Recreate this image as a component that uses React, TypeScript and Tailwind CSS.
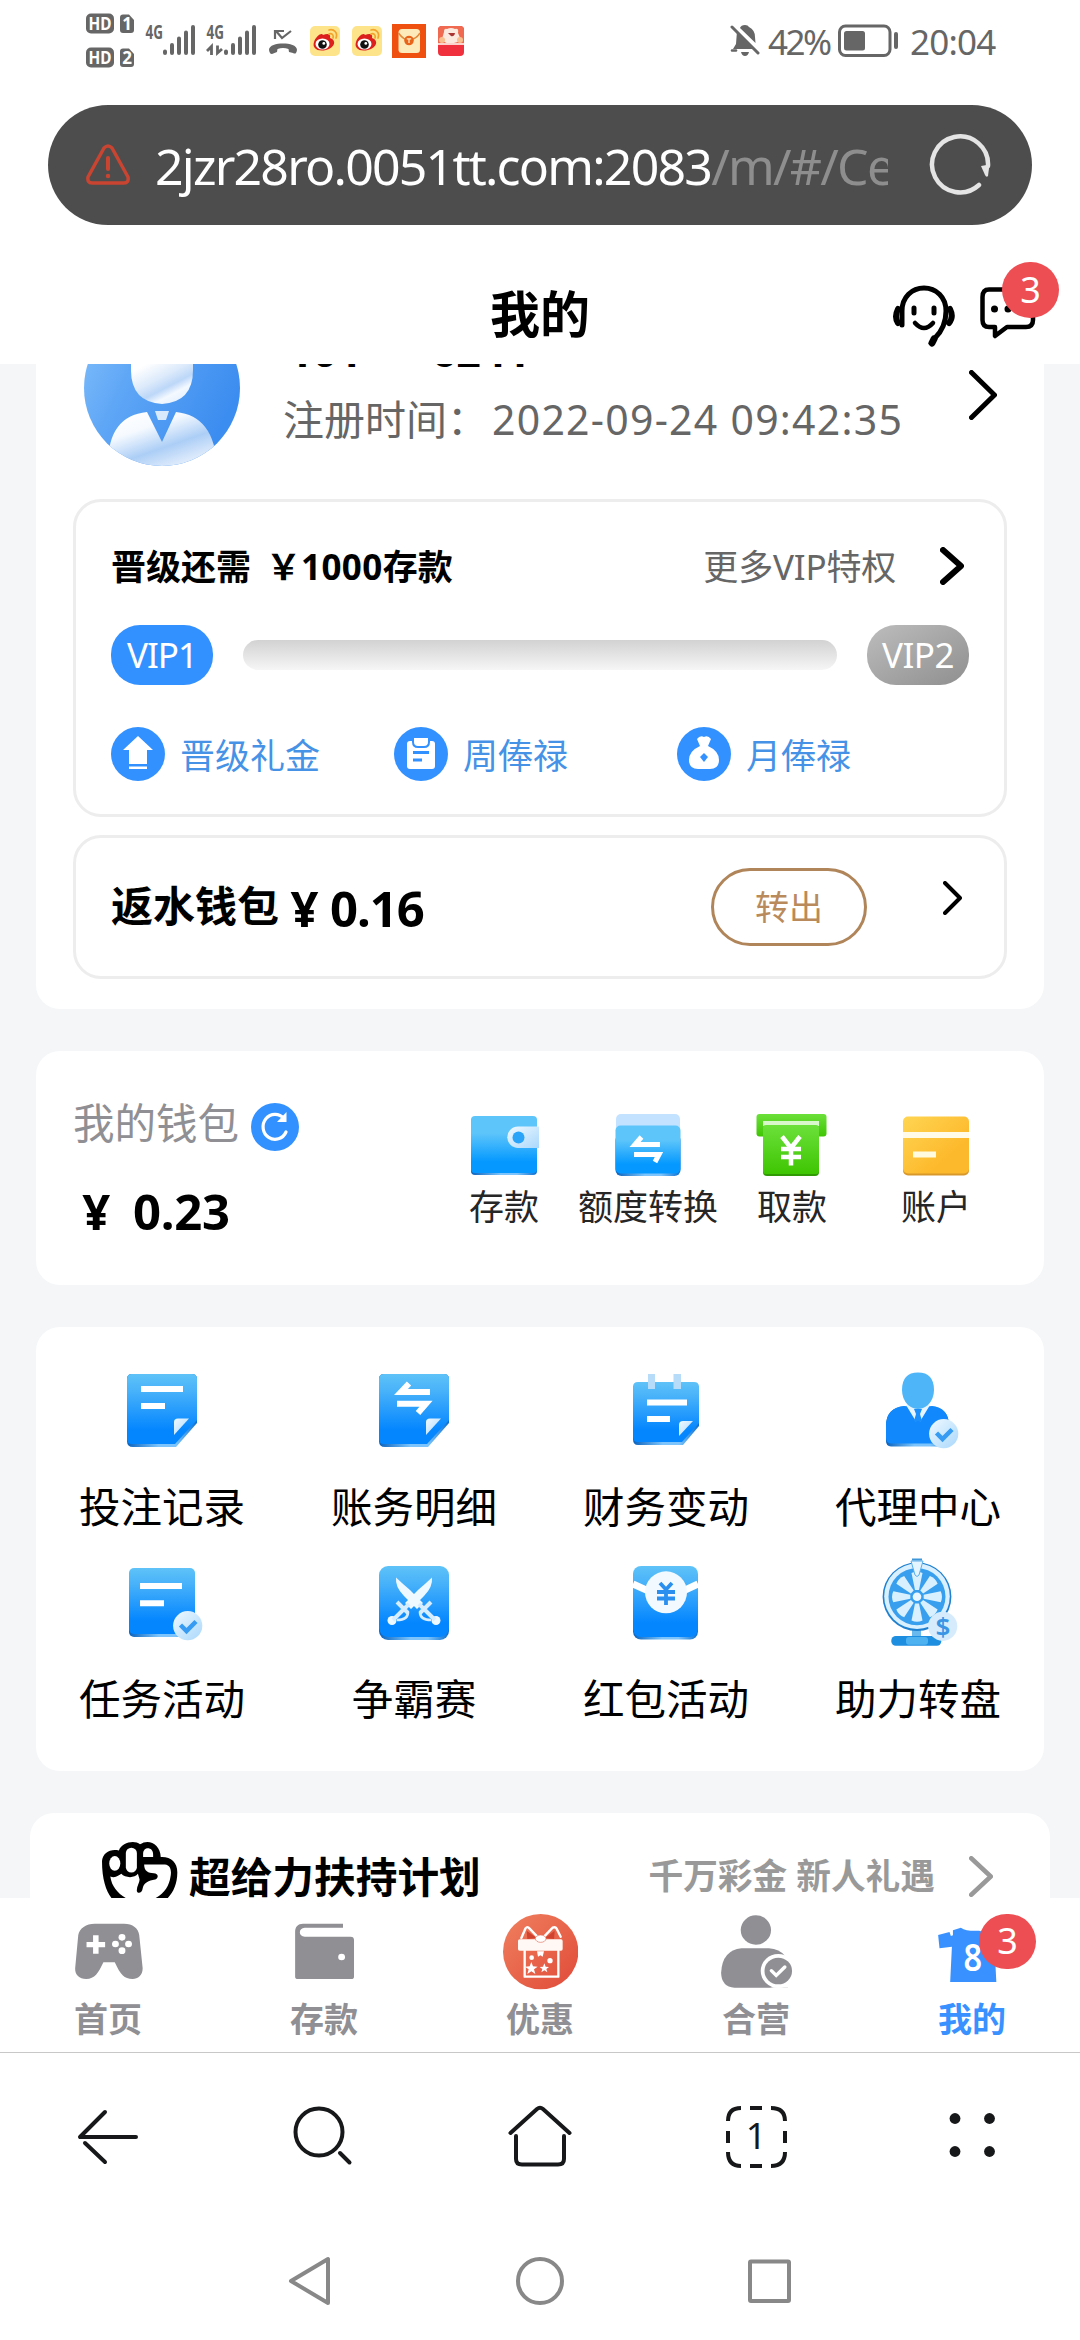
import React from "react";

const Defs = () => (
  <svg className="absolute" width="0" height="0">
    <defs>
      <linearGradient id="blue" x1="0" y1="0" x2="0" y2="1">
        <stop offset="0" stopColor="#5fc3f8" />
        <stop offset="0.25" stopColor="#47b1fa" />
        <stop offset="0.8" stopColor="#0486ff" />
        <stop offset="1" stopColor="#0486ff" />
      </linearGradient>
      <linearGradient id="wallet" x1="0" y1="0" x2="0" y2="1">
        <stop offset="0.3" stopColor="#5ec5fa" />
        <stop offset="0.8" stopColor="#0599ff" />
      </linearGradient>
      <linearGradient id="edge">
        <stop offset="0" stopColor="#0a62bd" />
        <stop offset="0.45" stopColor="#7cc4fb" />
        <stop offset="0.7" stopColor="#7cc4fb" />
        <stop offset="1" stopColor="#0a6fd0" />
      </linearGradient>
      <linearGradient id="pale" x1="0" y1="0" x2="1" y2="1">
        <stop offset="0" stopColor="#f0f9ff" />
        <stop offset="1" stopColor="#a9d8fc" />
      </linearGradient>
      <linearGradient id="green" x1="0" y1="0" x2="0" y2="1">
        <stop offset="0" stopColor="#6be03a" />
        <stop offset="1" stopColor="#3fc502" />
      </linearGradient>
      <linearGradient id="yellow" x1="0" y1="0" x2="1" y2="1">
        <stop offset="0" stopColor="#ffd552" />
        <stop offset="0.7" stopColor="#fdb92c" />
      </linearGradient>
      <linearGradient id="avatar" x1="0" y1="0" x2="1" y2="0.5">
        <stop offset="0" stopColor="#85c1fb" />
        <stop offset="0.4" stopColor="#5ea6f6" />
        <stop offset="1" stopColor="#3c8df0" />
      </linearGradient>
      <linearGradient id="head" x1="0.1" y1="0" x2="0.75" y2="1">
        <stop offset="0.2" stopColor="#ffffff" />
        <stop offset="0.5" stopColor="#dceafb" />
        <stop offset="0.68" stopColor="#bcd7f8" />
        <stop offset="0.82" stopColor="#f4f9ff" />
        <stop offset="1" stopColor="#e4effd" />
      </linearGradient>
      <linearGradient id="suit" x1="0.1" y1="0" x2="0.75" y2="1">
        <stop offset="0" stopColor="#ffffff" />
        <stop offset="0.3" stopColor="#f6faff" />
        <stop offset="0.62" stopColor="#accef6" />
        <stop offset="0.85" stopColor="#d9e8fb" />
        <stop offset="1" stopColor="#f0f6fe" />
      </linearGradient>
      <linearGradient id="gift" x1="0" y1="0" x2="1" y2="1">
        <stop offset="0" stopColor="#f0805f" />
        <stop offset="1" stopColor="#e04a38" />
      </linearGradient>
    </defs>
  </svg>
);

const Chevron = ({ w, h, stroke, color = "#000" }: { w: number; h: number; stroke: number; color?: string }) => (
  <svg width={w} height={h} viewBox={`0 0 ${w} ${h}`} fill="none" stroke={color} strokeWidth={stroke} strokeLinecap="round" strokeLinejoin="round">
    <path d={`M${stroke / 2} ${stroke / 2}L${w - stroke / 2} ${h / 2}L${stroke / 2} ${h - stroke / 2}`} />
  </svg>
);

const Weibo = ({ className }: { className: string }) => (
  <svg className={className} width="30" height="30" viewBox="0 0 30 30">
    <rect width="30" height="30" rx="5" fill="#fde48b" />
    <path d="M4 16C6 10 12 6 13 9C18 7 21 8 20 12C27 14 25 22 16 24C7 26 2 22 4 16Z" fill="#dc1f1c" />
    <ellipse cx="12.500" cy="18" rx="7" ry="5.500" fill="#fff" />
    <circle cx="12.500" cy="18.500" r="4.300" fill="#111" />
    <circle cx="13.800" cy="17.400" r="1.400" fill="#fff" />
    <path d="M19 4C24 2.500 28 7 26 12M19 8C22 7 24 9 23 12" fill="none" stroke="#f3a32c" strokeWidth="1.700" strokeLinecap="round" />
  </svg>
);

const StatusBar = () => (
  <div className="flex h-[105px] items-start">
    <svg className="ml-[86px]" width="170" height="80" viewBox="86 0 170 80" fill="#666">
      <rect x="86" y="13.500" width="28" height="20" rx="5" />
      <rect x="86" y="47.500" width="28" height="20" rx="5" />
      <path d="M123 14.500H129L134 20V30Q134 33 131 33H123Q120 33 120 30V17.500Q120 14.500 123 14.500Z" />
      <path d="M123 48.500H129L134 54V64Q134 67 131 67H123Q120 67 120 64V51.500Q120 48.500 123 48.500Z" />
      <g fill="#fff" fontWeight="700" textAnchor="middle">
        <text x="100" y="30" fontSize="18" textLength="23" lengthAdjust="spacingAndGlyphs">HD</text>
        <text x="100" y="64" fontSize="18" textLength="23" lengthAdjust="spacingAndGlyphs">HD</text>
        <text x="127" y="30" fontSize="17">1</text>
        <text x="127" y="64" fontSize="17">2</text>
      </g>
      <text x="145.500" y="39" fontSize="19" fontWeight="700" textLength="17.500" lengthAdjust="spacingAndGlyphs">4G</text>
      <text x="206.500" y="39" fontSize="19" fontWeight="700" textLength="17.500" lengthAdjust="spacingAndGlyphs">4G</text>
      <g stroke="#666" strokeWidth="4" strokeLinecap="round">
        <path d="M165 51.500V53M172 45V53M179 38.500V53M186 32.500V53M193 27V53" />
        <path d="M226 51.500V53M233 45V53M240 38.500V53M247 32.500V53M254 27V53" />
      </g>
      <path d="M207 51L211.500 46.500V55M217.500 45.500V53L222 49" fill="none" stroke="#666" strokeWidth="2.800" />
    </svg>
    <svg className="ml-[11px] mt-[29px]" width="32" height="26" viewBox="0 0 32 26" fill="none" stroke="#666" strokeWidth="2.200">
      <path d="M8 10V2H17M9 2L15 9L24 2" />
      <path d="M3 24C-1 17 8 14.500 16 14.500C24 14.500 33 17 29 24Q28 25 26 24L22 23L21.500 20Q16 18 10.500 20L10 23L5 25Q3.500 25 3 24Z" fill="#666" stroke="none" />
    </svg>
    <Weibo className="ml-[11px] mt-[26px]" />
    <Weibo className="ml-[12px] mt-[26px]" />
    <svg className="ml-[10px] mt-[24px]" width="34" height="34" viewBox="0 0 34 34">
      <rect width="34" height="34" fill="#f0500f" />
      <rect x="6.500" y="5" width="21.500" height="24" rx="3.500" fill="#fdeaba" />
      <path d="M6.500 9C10 14 14 16 17 16S25 14 28 9" fill="none" stroke="#e08a3c" strokeWidth="1.500" />
      <circle cx="17" cy="16.500" r="4.800" fill="#e8641b" />
      <path d="M14.800 14.800H19.200M17 14.800V19" stroke="#fdeaba" strokeWidth="1.300" />
    </svg>
    <svg className="ml-[12px] mt-[26px]" width="26" height="30" viewBox="0 0 26 30">
      <rect width="26" height="30" rx="4" fill="#f0303c" />
      <path d="M0 4Q0 0 4 0H22Q26 0 26 4V18H0Z" fill="#ef6a50" />
      <path d="M6 6Q6 2 9 3Q13 1 17 3Q21 2 20 7L23 14Q18 18 13 17Q6 18 4 13Z" fill="#fbe9df" />
      <circle cx="4" cy="14" r="3" fill="#f7c08e" />
      <circle cx="22" cy="14" r="3" fill="#f7c08e" />
      <path d="M10 7H17Q16 11 13 10Z" fill="#a33" />
      <rect y="17" width="26" height="2" fill="#fbd5cd" />
    </svg>
    <svg className="ml-[266px] mt-[24px]" width="30" height="33" viewBox="0 0 30 33" fill="#666">
      <path d="M7 7L24 25H3L6 20ZM10 4Q11 1 15 1Q18 1 19 3Q25 6 25 13L25.500 19ZM11 28H19Q18 32 15 32T11 28Z" />
      <path d="M2 3L28 29" stroke="#666" strokeWidth="3" strokeLinecap="round" />
      <path d="M2 26.500H6" stroke="#666" strokeWidth="2.500" strokeLinecap="round" />
    </svg>
    <span className="ml-2 mt-[20px] w-[63px] whitespace-nowrap text-[35px] leading-[44px] tracking-[-2.5px] text-[#666]">42%</span>
    <svg className="ml-[7px] mt-[24px]" width="62" height="34" viewBox="0 0 62 34">
      <rect x="1.500" y="2" width="50.500" height="29.500" rx="6" fill="none" stroke="#666" strokeWidth="3" />
      <rect x="6" y="7" width="21" height="19.500" rx="2.500" fill="#666" />
      <rect x="56" y="8" width="4" height="17" rx="2" fill="#666" />
    </svg>
    <span className="ml-[10px] mt-[20px] text-[35px] leading-[44px] tracking-[-0.8px] text-[#666]">20:04</span>
  </div>
);

const UrlBar = () => (
  <div className="mx-12 flex h-[120px] items-center rounded-full bg-[#4d4d4d]">
    <svg className="ml-[37px]" width="46" height="42" viewBox="0 0 46 42" fill="none" stroke="#c94431" strokeWidth="3.500" strokeLinecap="round" strokeLinejoin="round">
      <path d="M19 4Q23 0 27 4L43 33Q44 39 39 39H7Q2 39 3 33Z" />
      <path d="M23 14V25" strokeWidth="4" />
      <path d="M23 32V32.100" strokeWidth="4.500" />
    </svg>
    <div className="ml-[24px] mt-[2px] w-[733px] overflow-hidden whitespace-nowrap text-[50px] leading-[70px] tracking-[-1.78px] text-white">
      2jzr28ro.0051tt.com:2083<span className="text-[#8e8e8e]">/m/#/Ce</span>
    </div>
    <svg className="ml-[40px]" width="64" height="64" viewBox="0 0 64 64" fill="none">
      <path d="M51 52A28 28 0 1 1 60 33" stroke="#e4e4e4" strokeWidth="4.500" strokeLinecap="round" />
      <path d="M53 33L61.500 31.500L60 43Q58.500 45 57 42Z" fill="#e4e4e4" />
    </svg>
  </div>
);

const Header = () => (
  <header className="relative flex h-[139px] items-center justify-center bg-white pt-[38px]">
    <h1 className="text-[50px] font-bold leading-[60px]">我的</h1>
    <svg className="absolute left-[892px] top-[58px]" width="64" height="64" viewBox="0 0 64 64" fill="none" stroke="#000" strokeLinecap="round">
      <path d="M10 42V28C10 14 20 5 32 5S54 14 54 28C54 40 50 48 43 55" strokeWidth="5" />
      <path d="M6 26Q2 34 6 40M58 26Q62 34 57 40" strokeWidth="6" />
      <path d="M42 56L40 60" strokeWidth="7" />
      <path d="M22 25V30M42 25V30" strokeWidth="5" />
      <path d="M23 40Q32 50 41 40" strokeWidth="4.500" />
    </svg>
    <svg className="absolute left-[978px] top-[60px]" width="60" height="58" viewBox="0 0 60 58">
      <path d="M11 4.500H48Q55 4.500 55 12V35Q55 42 48 42H29L17 51V42H11Q4.500 42 4.500 35V12Q4.500 4.500 11 4.500Z" fill="none" stroke="#000" strokeWidth="4.500" strokeLinejoin="round" />
      <circle cx="16.500" cy="24" r="3.500" />
      <circle cx="30" cy="24" r="3.500" />
    </svg>
    <span className="absolute left-[1002px] top-[37px] h-[56px] w-[57px] rounded-full bg-[#ed4e54] text-center text-[36px] leading-[55px] text-white">3</span>
  </header>
);

const rewards = [
  {
    label: "晋级礼金",
    icon: <path d="M27 9L42 23H36V37H18V23H12ZM18 39.500H36V42H18Z" fill="#fff" />,
  },
  {
    label: "周俸禄",
    icon: (
      <>
        <rect x="13" y="14" width="28" height="28" rx="3" fill="#fff" />
        <path d="M19 10H35V15Q35 20 30 20H24Q19 20 19 15Z" fill="#fff" stroke="#3391ff" strokeWidth="2" />
        <path d="M19 25.500H35M19 33H28" stroke="#3391ff" strokeWidth="3" />
      </>
    ),
  },
  {
    label: "月俸禄",
    icon: (
      <>
        <path d="M20 12Q23 8 27 10Q31 8 34 12L31 19Q42 24 42 33Q42 42 33 42H21Q12 42 12 33Q12 24 23 19Z" fill="#fff" />
        <path d="M27 26L31 30L27 35L23 30Z" fill="#3391ff" />
      </>
    ),
  },
];

const ProfileCard = () => (
  <section className="-mt-[90px] h-[735px] rounded-[24px] bg-white px-[37px] pt-[36px]">
    <div className="flex h-[156px] pl-[11px]">
      <svg width="156" height="156" viewBox="0 0 156 156">
        <clipPath id="round">
          <circle cx="78" cy="78" r="78" />
        </clipPath>
        <g clipPath="url(#round)">
          <rect width="156" height="156" fill="url(#avatar)" />
          <path d="M47 45H109V60Q109 92 78 94Q47 92 47 60Z" fill="url(#head)" />
          <path d="M24 160Q22 106 63 102L78 132L92 102Q132 106 133 160Z" fill="url(#suit)" />
          <path d="M71 101H85L82 110H74Z" fill="#d9eafd" />
        </g>
      </svg>
      <div className="ml-[43px] flex flex-1 flex-col pt-[11px]">
        <div className="pl-[5px] text-[43px] font-bold leading-[60px]">101***6241</div>
        <div className="mt-[8px] flex whitespace-nowrap text-[41px] leading-[60px] text-[#666]">
          <span className="w-[209px]">注册时间：</span>
          <span className="tracking-[1.25px]">2022-09-24 09:42:35</span>
        </div>
      </div>
      <div className="pr-[10px] pt-[60px]">
        <Chevron w={28} h={50} stroke={5} />
      </div>
    </div>

    <div className="mt-[33px] h-[318px] rounded-[28px] border-[3px] border-[#ededed] px-[35px] pt-[43px]">
      <div className="flex h-[44px] items-center whitespace-nowrap text-[35px]">
        <span className="flex-1 font-bold">
          <span className="mr-[15px]">晋级还需</span>￥<span className="tracking-[0.4px]">1000</span>存款
        </span>
        <span className="mr-[44px] tracking-[-0.2px] text-[#666]">更多VIP特权</span>
        <span className="mr-[5px] -mt-[2px]">
          <Chevron w={24} h={38} stroke={6} />
        </span>
      </div>
      <div className="mt-[36px] flex h-[60px] items-center">
        <span className="h-[60px] w-[102px] rounded-[29px] bg-[#3391ff] text-center text-[35px] leading-[60px] tracking-[-1px] text-white">VIP1</span>
        <span className="mx-[30px] h-[30px] flex-1 rounded-full bg-gradient-to-b from-[#d2d2d2] to-[#f6f6f6]" />
        <span className="h-[60px] w-[102px] rounded-[29px] bg-gradient-to-br from-[#bdbdbd] to-[#8f8f8f] text-center text-[35px] leading-[60px] tracking-[-0.5px] text-white">VIP2</span>
      </div>
      <div className="mt-[42px] flex">
        {rewards.map((item) => (
          <div key={item.label} className="flex w-[283px] items-center">
            <svg width="54" height="54" viewBox="0 0 54 54">
              <circle cx="27" cy="27" r="27" fill="#3391ff" />
              {item.icon}
            </svg>
            <span className="ml-[15px] mt-[3px] text-[35px] leading-[44px] text-[#4592e6]">{item.label}</span>
          </div>
        ))}
      </div>
    </div>

    <div className="mt-[18px] flex h-[144px] items-center whitespace-nowrap rounded-[28px] border-[3px] border-[#ededed] px-[35px]">
      <span className="-mt-[3px] text-[42px] font-bold">返水钱包</span>
      <span className="ml-[8px] mt-[1px] flex-1 text-[49px] font-bold leading-[60px] tracking-[-1px]">
        <span className="mr-[9px] inline-block w-[34px] text-center">¥</span>0.16
      </span>
      <button className="h-[78px] w-[156px] rounded-full border-[3px] border-[#b0855a] text-[34px] leading-[70px] text-[#b98a5c]">转出</button>
      <span className="ml-[76px] mr-[7px] -mt-[18px]">
        <Chevron w={19} h={34} stroke={4} />
      </span>
    </div>
  </section>
);

const walletActions = [
  {
    label: "存款",
    icon: (
      <>
        <rect x="7" y="14" width="66" height="57" rx="4" fill="url(#edge)" />
        <rect x="7" y="12" width="66" height="57" rx="4" fill="url(#wallet)" />
        <path d="M75 22.500H54A10.700 10.700 0 0 0 54 44H75Z" fill="url(#pale)" />
        <circle cx="54.500" cy="33.500" r="6" fill="#2aa4f8" />
      </>
    ),
  },
  {
    label: "额度转换",
    icon: (
      <>
        <rect x="8" y="10" width="64" height="30" rx="5" fill="#c3e2ff" />
        <rect x="7.500" y="30" width="65" height="42" rx="6" fill="url(#edge)" />
        <rect x="7.500" y="21.500" width="65" height="48" rx="5" fill="url(#wallet)" />
        <path d="M52 40.500H27L33.500 33M26 50.500H51L47 58" fill="none" stroke="#fff" strokeWidth="5" />
      </>
    ),
  },
  {
    label: "取款",
    icon: (
      <>
        <rect x="4.500" y="10" width="70" height="22.500" rx="3" fill="url(#green)" />
        <rect x="11" y="17" width="56" height="5" fill="#d8f8cc" />
        <rect x="11" y="30" width="56" height="42" rx="4" fill="#2f9a04" />
        <rect x="11" y="21" width="56" height="49" rx="3" fill="url(#green)" />
        <path d="M30 32.500L39 44L48 32.500M29 45H49M29 53H49M39 44V61.500" fill="none" stroke="#fff" strokeWidth="4.500" />
      </>
    ),
  },
  {
    label: "账户",
    icon: (
      <>
        <rect x="7" y="30" width="66" height="41.500" rx="5" fill="#d9982a" />
        <rect x="7" y="12.500" width="66" height="57" rx="5" fill="url(#yellow)" />
        <rect x="7" y="28" width="66" height="6" fill="#fffbe8" />
        <rect x="17" y="47.500" width="23" height="6" fill="#fffbe0" />
      </>
    ),
  },
];

const WalletCard = () => (
  <section className="mt-[42px] flex h-[234px] rounded-[24px] bg-white">
    <div className="w-[396px] pl-[37px] pt-[50px]">
      <div className="flex items-center">
        <span className="-mt-[6px] text-[41.5px] leading-[56px] text-[#8f8f94]">我的钱包</span>
        <svg className="ml-[12px] mt-[1px]" width="48" height="48" viewBox="0 0 48 48">
          <circle cx="24" cy="24" r="24" fill="#3391ff" />
          <path d="M35 29A12 12.500 0 1 1 33 15.500" fill="none" stroke="#fff" strokeWidth="3.200" strokeLinecap="round" />
          <path d="M35.500 9V19H26Z" fill="#fff" />
        </svg>
      </div>
      <div className="mt-[30px] text-[49px] font-bold leading-[60px] tracking-[-0.3px]">
        <span className="mr-[14px] inline-block w-[46px] text-center">¥</span>0.23
      </div>
    </div>
    <div className="flex pt-[53px]">
      {walletActions.map((item) => (
        <div key={item.label} className="flex w-[144px] flex-col items-center">
          <svg width="80" height="80" viewBox="0 0 80 80">
            {item.icon}
          </svg>
          <span className="mt-px whitespace-nowrap text-[35px] leading-[44px] text-[#262626]">{item.label}</span>
        </div>
      ))}
    </div>
  </section>
);

const CheckBadge = () => (
  <>
    <circle cx="75.700" cy="73.700" r="14.600" fill="url(#pale)" />
    <path d="M68.500 73L74.500 79L84 69.500" fill="none" stroke="#369cf3" strokeWidth="4.500" />
  </>
);

const Note = () => (
  <>
    <path d="M20 14H80Q85 14 85 19V63L64 87H21Q15 87 15 81V19Q15 14 20 14Z" fill="url(#edge)" />
    <path d="M20 14H80Q85 14 85 19V60L63 84H20Q15 84 15 79V19Q15 14 20 14Z" fill="url(#blue)" />
    <path d="M62 75V62Q62 58.500 66 58.500H77Z" fill="url(#pale)" />
  </>
);

const features = [
  {
    label: "投注记录",
    icon: (
      <>
        <Note />
        <path d="M29 29H71M29 46H53" stroke="#fff" strokeWidth="6" />
      </>
    ),
  },
  {
    label: "账务明细",
    icon: (
      <>
        <Note />
        <path d="M66 32H37L45 23.500M33 43.800H62L54 53" fill="none" stroke="#fff" strokeWidth="6" />
      </>
    ),
  },
  {
    label: "财务变动",
    icon: (
      <>
        <path d="M22 24H78Q83 24 83 29V66L67 85H22Q17 85 17 79V29Q17 24 22 24Z" fill="url(#edge)" />
        <path d="M22 22H78Q83 22 83 27V63L66 82H22Q17 82 17 77V27Q17 22 22 22Z" fill="url(#blue)" />
        <path d="M32 14H39V29H32ZM57.500 14H65V29H57.500Z" fill="#b7dcf9" />
        <path d="M31 42.500H71M31 59H54" stroke="#fff" strokeWidth="6" />
        <path d="M63 76V65Q63 61 67 61H77Z" fill="url(#pale)" />
      </>
    ),
  },
  {
    label: "代理中心",
    icon: (
      <>
        <path d="M18 66Q18 48 36 46L50 48L64 46Q81 48 81 66V86.500H23Q18 86 18 81Z" fill="url(#edge)" />
        <path d="M18 66Q18 48 36 46L50 48L64 46Q81 48 81 66V83.500H23Q18 83 18 78Z" fill="#1189fc" />
        <path d="M38 45L48 61.500L50 52L52 61.500L62 45Z" fill="#e8f5ff" />
        <path d="M46 49H54L52 54L54 61H46L48 54Z" fill="#1a8efb" />
        <path d="M34 30Q34 12.500 50 12.500T66 30Q66 39 60 45Q50 53 40 45Q34 39 34 30Z" fill="#4fb5f9" />
        <CheckBadge />
      </>
    ),
  },
  {
    label: "任务活动",
    icon: (
      <>
        <rect x="17" y="18" width="66" height="67" rx="5" fill="url(#edge)" />
        <rect x="17" y="16" width="66" height="66" rx="5" fill="url(#blue)" />
        <path d="M28 34H70M28 51.200H52" stroke="#fff" strokeWidth="6" />
        <CheckBadge />
      </>
    ),
  },
  {
    label: "争霸赛",
    icon: (
      <>
        <rect x="15" y="18" width="70" height="70" rx="9" fill="url(#edge)" />
        <rect x="15" y="14" width="70" height="71" rx="9" fill="url(#blue)" />
        <g fill="#eef8ff">
          <path d="M32 25.500Q31 35 40 44L53 57L59 51L46 38Q40 33 32 25.500Z" />
          <path d="M68 25.500Q69 35 60 44L47 57L41 51L54 38Q60 33 68 25.500Z" />
          <circle cx="28" cy="68.500" r="4.500" />
          <circle cx="72" cy="68.500" r="4.500" />
        </g>
        <g fill="none" stroke="#d6edff" strokeWidth="2.600">
          <path d="M45 52L29 68M33 50L44 61M55 52L71 68M67 50L56 61" strokeWidth="4" />
          <path d="M44 60Q44 68 33 68M56 60Q56 68 67 68" />
        </g>
      </>
    ),
  },
  {
    label: "红包活动",
    icon: (
      <>
        <rect x="17" y="18" width="65" height="69.600" rx="8" fill="url(#edge)" />
        <rect x="17" y="14" width="65" height="71" rx="8" fill="url(#blue)" />
        <path d="M17 32L50 47L82 32" fill="none" stroke="#fff" strokeWidth="7" />
        <circle cx="50" cy="40.300" r="21" fill="#f3faff" />
        <path d="M44 31L50 37.500L56 31M41 40H59M41 46.500H59M50 38V53" fill="none" stroke="#2a8fee" strokeWidth="3.800" />
      </>
    ),
  },
  {
    label: "助力转盘",
    icon: (
      <>
        <path d="M44 78H53V86H44Z" fill="#69b9ef" />
        <rect x="23.300" y="84" width="50" height="9.700" rx="4.500" fill="#1e8fe0" />
        <rect x="38" y="85" width="22" height="7.700" rx="3" fill="#4fb2f0" />
        <circle cx="49" cy="44.700" r="34.400" fill="#1f80cf" />
        <circle cx="49" cy="44.200" r="32.800" fill="#d8f0ff" />
        <circle cx="49" cy="44.700" r="28.500" fill="#389fee" />
        <g fill="#d9f1ff">
          {[0, 45, 90, 135, 180, 225, 270, 315].map((deg) => (
            <path key={deg} d="M47 38L43.500 21Q49 18.500 54.500 21L51 38Z" transform={`rotate(${deg} 49 44.700)`} />
          ))}
        </g>
        <circle cx="49" cy="44.700" r="6" fill="#389fee" />
        <circle cx="49" cy="44.700" r="4.300" fill="#e8f7ff" />
        <path d="M43 9L47 23Q49 26 51 23L55 9Z" fill="#e4f5ff" stroke="#58aeea" strokeWidth="1" />
        <path d="M44 7.500H54" stroke="#3f96d8" strokeWidth="2" />
        <circle cx="74.700" cy="74.300" r="14.600" fill="#d6ecfd" />
        <text x="75" y="83.500" textAnchor="middle" fontSize="26" fontWeight="600" fill="#3a96e4">$</text>
      </>
    ),
  },
];

const FeatureGrid = () => (
  <section className="mt-[42px] grid h-[444px] grid-cols-4 grid-rows-[192px_192px] rounded-[24px] bg-white pt-[33px]">
    {features.map((item) => (
      <div key={item.label} className="flex flex-col items-center">
        <svg width="100" height="100" viewBox="0 0 100 100">
          {item.icon}
        </svg>
        <span className="mt-[19px] text-[41.5px] leading-[56px]">{item.label}</span>
      </div>
    ))}
  </section>
);

const PromoCard = () => (
  <section className="-mx-[6px] mt-[42px] flex h-[150px] whitespace-nowrap rounded-[24px] bg-white pl-[72px] pt-[28px] font-bold">
    <svg width="76" height="59" viewBox="296 150 220 176" preserveAspectRatio="none">
      <path d="M296 210C298 185 320 172 345 178C352 155 390 145 406 160C430 142 465 158 466 198C495 196 515 215 514 245C514 280 500 310 480 326H328C310 305 296 270 296 210Z" />
      <g fill="#fff">
        <ellipse cx="333" cy="217" rx="16" ry="22" />
        <rect x="365" y="170" width="32" height="74" rx="16" />
        <path d="M415 198V188C415 166 444 166 444 190V198Z" />
        <path d="M320 256C335 262 345 252 352 248C362 260 390 262 400 248L404 262C408 270 395 285 397 300C400 308 412 306 414 290C418 275 430 268 450 265C462 258 458 246 446 246C430 246 418 240 418 220H478C498 222 497 245 494 258C490 285 475 310 440 326H375C345 310 325 290 320 256Z" />
      </g>
    </svg>
    <span className="ml-[11px] mt-[8px] flex-1 text-[41.7px] leading-[56px]">超给力扶持计划</span>
    <span className="mr-[34px] mt-[13px] text-[34.7px] leading-[44px] text-[#999]">千万彩金 新人礼遇</span>
    <span className="mr-[57px] mt-[15px]">
      <Chevron w={24} h={41} stroke={4.5} color="#999" />
    </span>
  </section>
);

const tabs = [
  {
    label: "首页",
    box: "203 372 220.7 228",
    icon: (
      <>
        <path d="M275 401H360C385 401 402 415 404 435L414 535C414 557 400 567 385 567C360 567 350 555 333 517H300C285 550 275 567 250 567C230 567 217 555 218 535L227 435C230 415 250 401 275 401Z" />
        <path d="M270 436H286V456H305V472H286V491H270V472H251V456H270Z" fill="#fff" />
        <g fill="#fff">
          <circle cx="354" cy="442" r="10" />
          <circle cx="335" cy="462" r="10" />
          <circle cx="373" cy="462" r="10" />
          <circle cx="354" cy="482" r="10" />
        </g>
      </>
    ),
  },
  {
    label: "存款",
    box: "830.5 372 220.7 228",
    icon: (
      <>
        <path d="M996 401H880C865 401 857 410 857 425V560Q857 567 865 567H1020Q1028 567 1028 560V450Q1028 440 1018 440H885C866 440 866 413 885 413H996Z" />
        <circle cx="992" cy="501" r="10" fill="#fff" />
      </>
    ),
  },
  {
    label: "优惠",
    box: "36 42 228 228",
    icon: (
      <>
        <circle cx="152" cy="155" r="113" fill="url(#gift)" />
        <path d="M110 92L140 114L112 117ZM194 92L165 114L192 117Z" fill="#d0432f" />
        <g fill="none" stroke="#fff" strokeWidth="7" strokeLinejoin="round" strokeLinecap="round">
          <path d="M144 112L116 83Q110 79 106 86L94 114M160 112L188 83Q196 79 200 86L212 110" />
          <path d="M104 152V230H205V152" />
        </g>
        <rect x="84" y="118" width="134" height="34" rx="5" fill="#fff8f5" />
        <ellipse cx="152" cy="116" rx="16" ry="11" fill="#fff" stroke="#e5715e" strokeWidth="2" />
        <g fill="#fff">
          <path d="M124 186L129 199L143 200L132 208L136 222L124 214L112 222L116 208L105 200L119 199Z" />
          <path d="M163 190L167 200L177 201L169 207L172 217L163 211L154 217L157 207L149 201L159 200Z" />
          <path d="M141 154H162L158 170L151 166L144 170Z" />
          <circle cx="125" cy="173" r="7" />
          <circle cx="180" cy="182" r="8" />
        </g>
      </>
    ),
  },
  {
    label: "合营",
    box: "517 372 220.7 228",
    icon: (
      <>
        <circle cx="627" cy="420" r="44" />
        <path d="M585 475H665Q695 477 712 498Q725 520 720 593H565Q527 590 526 548Q530 480 585 475Z" />
        <circle cx="692" cy="543" r="51" fill="#fff" />
        <path d="M668 593H740V550L700 586Z" fill="#fff" />
        <circle cx="692" cy="543" r="40" />
        <path d="M672 542L686 556L711 531" fill="none" stroke="#fff" strokeWidth="10" strokeLinecap="round" />
      </>
    ),
  },
  {
    label: "我的",
    box: "1144 372 220.7 228",
    active: true,
    icon: (
      <>
        <path d="M1156 435L1189 426L1193 438L1199 436V421L1222 413Q1240 425 1275 422L1318 435L1325 576H1191L1196 470L1160 475Z" />
        <text x="1257" y="543" textAnchor="middle" fontSize="114" fontWeight="600" textLength="54" lengthAdjust="spacingAndGlyphs" fill="#fff">8</text>
      </>
    ),
  },
];

const TabBar = () => (
  <nav className="relative flex h-[155px] border-b border-[#c8c8c8] bg-white pt-[16px]">
    {tabs.map((tab) => (
      <div key={tab.label} className={tab.active ? "flex flex-1 flex-col items-center text-[#3891ff]" : "flex flex-1 flex-col items-center text-[#8f8f94]"}>
        <svg width="76" height="76" viewBox={tab.box} preserveAspectRatio="none" fill="currentColor">
          {tab.icon}
        </svg>
        <span className="mt-[7px] text-[34px] font-bold leading-[44px]">{tab.label}</span>
      </div>
    ))}
    <span className="absolute left-[979px] top-[16px] h-[55px] w-[57px] rounded-full bg-[#ed4e54] text-center text-[36px] leading-[54px] text-white">3</span>
  </nav>
);

const BrowserNav = () => (
  <div className="flex h-[168px] items-center justify-around bg-white">
    <svg width="80" height="80" viewBox="68 2097 80 80" fill="none" stroke="#17181a" strokeWidth="4" strokeLinecap="round">
      <path d="M105 2112L80 2137H136M85 2143L105 2162" strokeLinejoin="round" />
    </svg>
    <svg width="80" height="80" viewBox="284 2097 80 80" fill="none" stroke="#17181a" strokeWidth="4" strokeLinecap="round">
      <circle cx="319" cy="2132" r="23.500" />
      <path d="M340 2153L349.500 2162.500" />
    </svg>
    <svg width="80" height="80" viewBox="500 2097 80 80" fill="none" stroke="#17181a" strokeWidth="4" strokeLinecap="round">
      <path d="M510.500 2133L537 2109Q540 2106.500 543 2109L569.500 2133" />
      <path d="M516 2136V2159Q516 2164.500 522 2164.500H558Q564 2164.500 564 2159V2136" />
    </svg>
    <svg width="80" height="80" viewBox="716 2097 80 80" fill="none" stroke="#17181a" strokeWidth="4">
      <path d="M728 2121Q728 2108 741 2108M750 2108H762M771 2108Q785 2108 785 2121M785 2131V2143M785 2152Q785 2166 771 2166M762 2166H750M741 2166Q728 2166 728 2152M728 2143V2131" />
      <text x="756" y="2149" textAnchor="middle" fontSize="36" fill="#17181a" stroke="none">1</text>
    </svg>
    <svg width="80" height="80" viewBox="932 2097 80 80" fill="#17181a">
      <circle cx="955" cy="2118.500" r="5.400" />
      <circle cx="989.500" cy="2118.500" r="5.400" />
      <circle cx="955" cy="2151.500" r="5.400" />
      <circle cx="989.500" cy="2151.500" r="5.400" />
    </svg>
  </div>
);

const SystemNav = () => (
  <div className="flex h-[119px] items-center justify-center gap-[170px] bg-white fill-none stroke-[#888] stroke-[4px]">
    <svg width="60" height="60" viewBox="279 2250 60 60" strokeLinejoin="round">
      <path d="M327 2258V2302L290 2280Z" />
    </svg>
    <svg width="60" height="60" viewBox="510 2250 60 60">
      <circle cx="540" cy="2280" r="22" />
    </svg>
    <svg width="60" height="60" viewBox="740 2250 60 60" strokeLinejoin="round">
      <rect x="750" y="2260.500" width="39" height="39.500" rx="1" />
    </svg>
  </div>
);

export default function App() {
  return (
    <div className="flex h-[2340px] w-[1080px] flex-col overflow-hidden bg-white text-black [font-family:'Noto_Sans','Noto_Sans_CJK_SC',sans-serif]">
      <Defs />
      <StatusBar />
      <UrlBar />
      <Header />
      <main className="h-[1534px] overflow-hidden bg-[#f4f6f8] px-9">
        <ProfileCard />
        <WalletCard />
        <FeatureGrid />
        <PromoCard />
      </main>
      <TabBar />
      <BrowserNav />
      <SystemNav />
    </div>
  );
}
